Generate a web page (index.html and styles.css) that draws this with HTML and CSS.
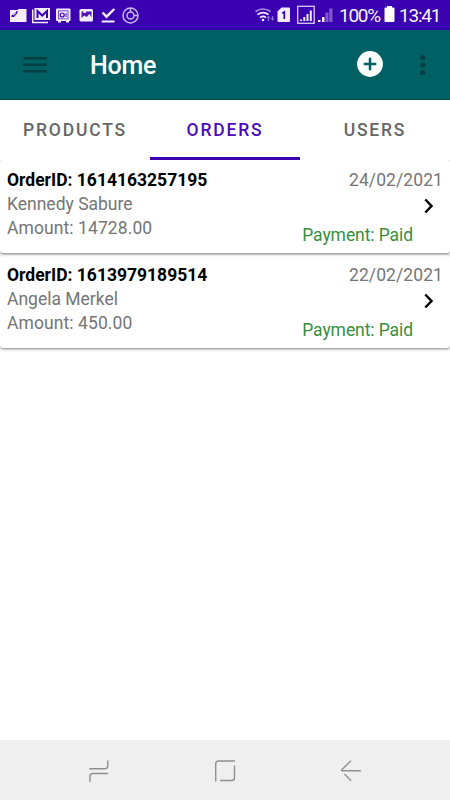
FILE: index.html
```html
<!DOCTYPE html>
<html lang="en">
<head>
  <meta charset="UTF-8" />
  <title>Home</title>
  <link rel="stylesheet" href="styles.css">
</head>
<body>

<div class="screen">

  <!-- Status bar -->
  <div class="status-bar">
    <svg class="notifications" width="132" height="20" viewBox="0 0 132 20" fill="#f3edff">
      <path d="M0 5h7l2-1h7.500v13H0z"/>
      <path d="M1.500 10.500l6-5v2.500L4 12H1.500z" fill="#3b00af"/>
      <path d="M3 9.500l3-2.500v1L4 10.500z"/>
      <path d="M24.500 3H40v12H24.500z"/>
      <path d="M27.500 13V6l4.700 4.500L37 6v7" fill="none" stroke="#3b00af" stroke-width="2"/>
      <path d="M22.700 4.500v13H38" fill="none" stroke="#f3edff" stroke-width="1.500"/>
      <rect x="46" y="3.500" width="14.500" height="12.500" rx="1"/>
      <path d="M48 16h3v1.500h-3zM56 16h3v1.500h-3z"/>
      <rect x="48.500" y="5.800" width="9.500" height="8" fill="none" stroke="#7a50cc"/>
      <circle cx="52.200" cy="10" r="2" fill="none" stroke="#3b00af" stroke-width="1.200"/>
      <path d="M56 8v4" stroke="#3b00af"/>
      <rect x="69.500" y="4" width="13.500" height="12.500" rx="1.500"/>
      <path d="M71.500 13V6.500h2V8h2.500V6.500h5.500v6l-2-3.500-3 3-2-1.500z" fill="#3b00af" opacity=".9"/>
      <path d="M92.500 7.500l4 4.200L104.300 4" fill="none" stroke="#f3edff" stroke-width="2.400"/>
      <path d="M91.700 15.500h12.800v2H91.700z"/>
      <g fill="none" stroke="#c9b6ee" stroke-width="1.500">
        <circle cx="120.500" cy="10.500" r="7.500"/>
        <circle cx="120.500" cy="10.500" r="3.500"/>
        <path d="M120.500 3v4M124 10.500h4"/>
      </g>
    </svg>
    <svg class="signals" width="80" height="20" viewBox="0 0 80 20" fill="#f3edff">
      <g fill="none" stroke="#f3edff" stroke-width="1.700">
        <path d="M.5 6.500q7.500-5 15 0" stroke="#a98fdf"/>
        <path d="M2.500 9.700q5.500-4.300 11 0"/>
        <path d="M5 12.700q3-2.500 6 0"/>
      </g>
      <circle cx="8" cy="15" r="1.300"/>
      <path d="M13.500 10.500l2 2.500h-1.300v3h-1.400v-3h-1.300zM17.500 16l-2-2.500h1.300V11h1.400v2.500h1.300z" fill="#8c6bd2"/>
      <path d="M26.500 2.500H34q1 0 1 1V16q0 1-1 1H23.500q-1 0-1-1V6.500z"/>
      <path d="M27.300 8.300l2-1.300v7" fill="none" stroke="#3b00af" stroke-width="1.700"/>
      <rect x="42.700" y="1.300" width="16.500" height="17" fill="none" stroke="#d9cbf6" stroke-width="1.300"/>
      <path d="M45 14.500h2V16h-2zM48.300 12h2v4h-2zM51.500 9h2v7h-2zM54.800 5.500h2V16h-2z"/>
      <path d="M63 15h2.500v2H63zM67 12h2.500v5H67z"/>
      <path d="M70.500 7.500h3V17h-3zM74.200 3.500h3.300V17h-3.300z" fill="#8058cc"/>
    </svg>
    <span class="battery-level">100%</span>
    <svg class="battery" width="11" height="16" viewBox="0 0 11 16" fill="#fff">
      <path d="M3 0h5v1.500h1.500q1 0 1 1V15q0 1-1 1h-8q-1 0-1-1V2.500q0-1 1-1H3z"/>
    </svg>
    <span class="clock">13:41</span>
  </div>

  <!-- App bar -->
  <div class="app-bar">
    <svg class="menu-icon" width="24" height="18" viewBox="0 0 24 18" fill="#033f42">
      <rect x=".3" y="1" width="23.500" height="2.500"/>
      <rect x=".3" y="7.500" width="23.500" height="2.500"/>
      <rect x=".3" y="14" width="23.500" height="2.500"/>
    </svg>
    <h1>Home</h1>
    <svg class="add-icon" width="26" height="26" viewBox="0 0 26 26">
      <circle cx="13" cy="13" r="12.900" fill="#fff"/>
      <path d="M13 6.700v12.600M6.700 13h12.600" stroke="#006064" stroke-width="2.500"/>
    </svg>
    <svg class="more-icon" width="6" height="22" viewBox="0 0 6 22" fill="#033f42">
      <circle cx="2.700" cy="3.500" r="2.600"/>
      <circle cx="2.700" cy="11" r="2.600"/>
      <circle cx="2.700" cy="18.500" r="2.600"/>
    </svg>
  </div>

  <!-- Tabs -->
  <div class="tabs">
    <div class="tab">PRODUCTS</div>
    <div class="tab active">ORDERS</div>
    <div class="tab">USERS</div>
  </div>

  <!-- Orders list -->
  <div class="orders">
    <div class="order-card">
      <div class="order-info">
        <div class="order-id">OrderID: 1614163257195</div>
        <div>Kennedy Sabure</div>
        <div class="amount">Amount: 14728.00</div>
      </div>
      <div class="order-side">
        <div class="date">24/02/2021</div>
        <svg class="arrow" width="10" height="16" viewBox="0 0 10 16" fill="none" stroke="#000" stroke-width="2.500">
          <path d="M1.300 1.500L7.500 8l-6.200 6.500"/>
        </svg>
        <div class="payment">Payment: Paid</div>
      </div>
    </div>

    <div class="order-card">
      <div class="order-info">
        <div class="order-id">OrderID: 1613979189514</div>
        <div>Angela Merkel</div>
        <div class="amount">Amount: 450.00</div>
      </div>
      <div class="order-side">
        <div class="date">22/02/2021</div>
        <svg class="arrow" width="10" height="16" viewBox="0 0 10 16" fill="none" stroke="#000" stroke-width="2.500">
          <path d="M1.300 1.500L7.500 8l-6.200 6.500"/>
        </svg>
        <div class="payment">Payment: Paid</div>
      </div>
    </div>
  </div>

  <!-- Navigation bar -->
  <div class="nav-bar">
    <svg width="22" height="24" viewBox="0 0 22 24">
      <path d="M1.300 9.800h15.500q3 0 3-3V1.500M20 14.500H5q-3 0-3 3v5.500"/>
    </svg>
    <svg width="22" height="24" viewBox="0 0 22 24">
      <path d="M1.700 22.500V5q0-3 3-3H21M20.500 6.500v12.500q0 2.500-3 2.500H6"/>
    </svg>
    <svg width="22" height="24" viewBox="0 0 22 24">
      <path d="M21 11.700H2.500q-1.500 0-.5-1.200L11 1.700M4.500 15l6.500 6.700"/>
    </svg>
  </div>

</div>

</body>
</html>
```

FILE: styles.css
```css
body {
  font-family: Roboto, sans-serif;
  background: #fff;
  margin: 0;
}

.screen {
  display: flex;
  flex-direction: column;
  height: 800px;
  width: 450px;
  overflow: hidden;
}

.status-bar {
  display: flex;
  align-items: center;
  height: 30px;
  box-sizing: border-box;
  padding: 0 10px;
  background: #3b00af;
  color: #f8f4ff;
  font-size: 19px;
  line-height: 30px;
}

.signals {
  margin-left: auto;
  margin-right: 4px;
}

.battery-level {
  width: 39px;
  margin-right: 6px;
  padding-top: 2px;
  letter-spacing: -1.3px;
}

.battery {
  margin: 0 4px 2px 0;
}

.clock {
  width: 41px;
  padding-top: 2px;
  letter-spacing: -1.2px;
}

.app-bar {
  display: flex;
  align-items: center;
  height: 70px;
  box-sizing: border-box;
  padding: 0 24px 0 23px;
  background: #006064;
  border-bottom: 1px solid #03464a;
}

.app-bar h1 {
  margin: 2px 0 0 43px;
  color: #fff;
  font-size: 25px;
  font-weight: 500;
  letter-spacing: -0.2px;
}

.add-icon {
  margin: 0 37px 1px auto;
}

.tabs {
  display: flex;
  height: 60px;
}

.tab {
  flex: 1;
  box-sizing: border-box;
  border-bottom: 3px solid transparent;
  color: #666;
  font-size: 17.5px;
  font-weight: 500;
  letter-spacing: 1.8px;
  line-height: 61px;
  text-align: center;
}

.tab.active {
  border-color: #3b00af;
  color: #4a0cb8;
}

.orders {
  display: flex;
  flex-direction: column;
  gap: 2px;
  flex: 1;
}

.order-card {
  display: flex;
  justify-content: space-between;
  height: 93px;
  box-sizing: border-box;
  padding: 8px 7px 0;
  border-radius: 3px;
  background: #fff;
  box-shadow: 0 1px 3px rgba(0, 0, 0, 0.5);
  color: #757575;
  font-size: 17.5px;
  line-height: 24px;
}

.order-card:first-child {
  clip-path: inset(0 0 -4px 0);
}

.order-id {
  color: #000;
  font-weight: bold;
}

.amount,
.date {
  letter-spacing: 0.09px;
}

.order-side {
  display: flex;
  flex-direction: column;
  align-items: flex-end;
}

.arrow {
  margin: 6px 9px 0 0;
}

.payment {
  margin: 9px 30px 0 0;
  color: #388e3c;
  letter-spacing: -0.08px;
}

.nav-bar {
  display: flex;
  justify-content: space-between;
  align-items: center;
  height: 60px;
  box-sizing: border-box;
  padding: 1px 88px 0;
  background: #efefef;
}

.nav-bar svg {
  fill: none;
  stroke: #909090;
  stroke-width: 1.4;
}
```
